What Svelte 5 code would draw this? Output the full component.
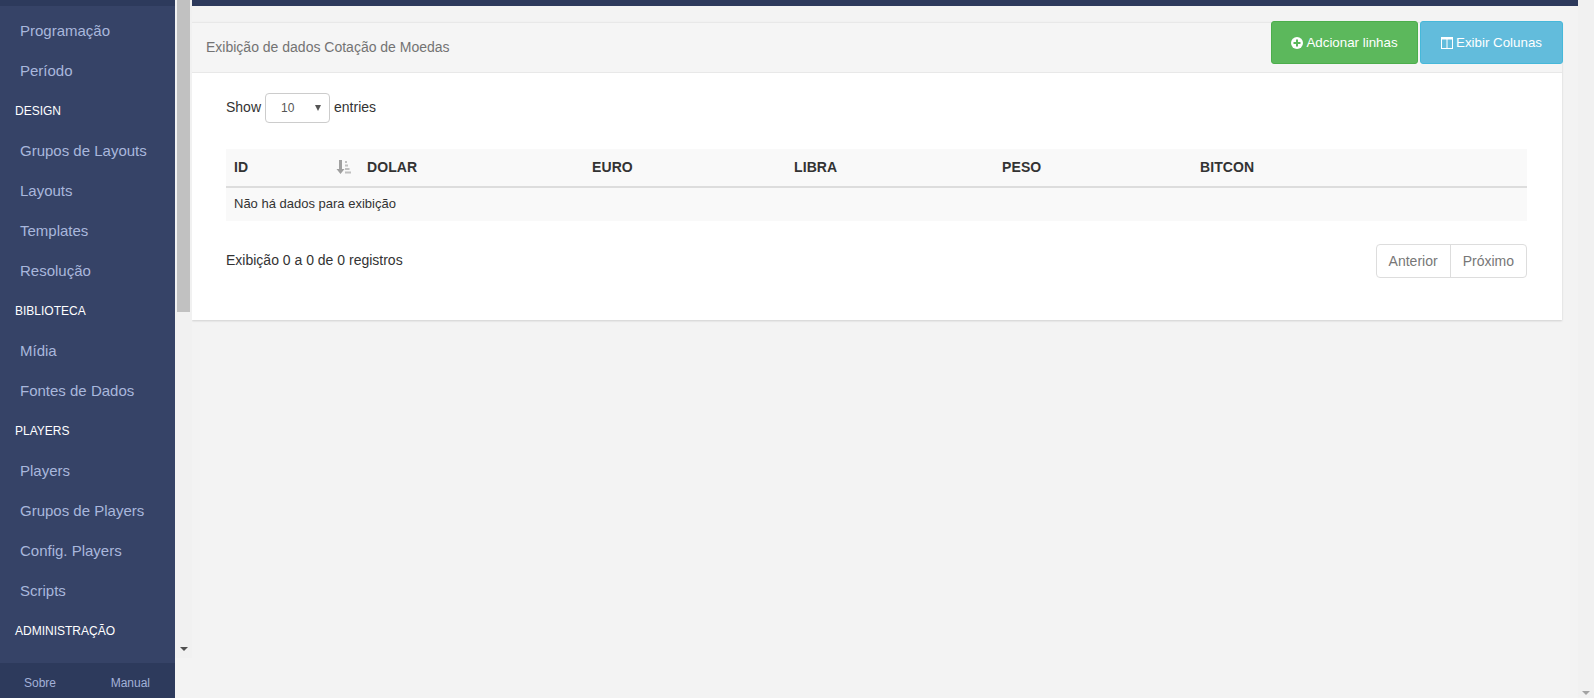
<script lang="ts">
	const menu = [
		{ label: 'Programação' },
		{ label: 'Período' },
		{ label: 'DESIGN', head: true },
		{ label: 'Grupos de Layouts' },
		{ label: 'Layouts' },
		{ label: 'Templates' },
		{ label: 'Resolução' },
		{ label: 'BIBLIOTECA', head: true },
		{ label: 'Mídia' },
		{ label: 'Fontes de Dados' },
		{ label: 'PLAYERS', head: true },
		{ label: 'Players' },
		{ label: 'Grupos de Players' },
		{ label: 'Config. Players' },
		{ label: 'Scripts' },
		{ label: 'ADMINISTRAÇÃO', head: true }
	];

	const columns = [
		{ label: 'ID', width: 133 },
		{ label: 'DOLAR', width: 225 },
		{ label: 'EURO', width: 202 },
		{ label: 'LIBRA', width: 208 },
		{ label: 'PESO', width: 198 },
		{ label: 'BITCON', width: 335 }
	];
</script>

<div class="page">
	<aside class="sidebar">
		<div class="side-top"></div>
		<nav class="menu">
			{#each menu as item}
				<div class:head={item.head} class="item">{item.label}</div>
			{/each}
		</nav>
		<div class="side-foot">
			<span>Sobre</span>
			<span>Manual</span>
		</div>
	</aside>

	<div class="side-scroll">
		<div class="thumb"></div>
		<div class="arrow"></div>
	</div>

	<main class="content">
		<div class="topbar"></div>
		<section class="panel">
			<header class="panel-head">
				<span class="panel-title">Exibição de dados Cotação de Moedas</span>
				<div class="actions">
					<button class="btn green">
						<svg width="12" height="12" viewBox="0 0 12 12">
							<circle cx="6" cy="6" r="6" fill="#fff" />
							<path d="M2.500 6h7M6 2.500v7" stroke="#5cb85c" stroke-width="2" />
						</svg>
						Adcionar linhas
					</button>
					<button class="btn blue">
						<svg width="12" height="12" viewBox="0 0 12 12" fill="none">
							<rect x="0.500" y="0.500" width="11" height="11" stroke="#fff" />
							<path d="M0 1.500h12" stroke="#fff" stroke-width="2" />
							<path d="M6 2v10" stroke="#fff" />
						</svg>
						Exibir Colunas
					</button>
				</div>
			</header>

			<div class="panel-body">
				<div class="length">
					Show
					<div class="select">
						<span>10</span>
						<i class="caret"></i>
					</div>
					entries
				</div>

				<table>
					<thead>
						<tr>
							{#each columns as col, i}
								<th style="width: {col.width}px">
									{col.label}
									{#if i === 0}
										<svg class="sort" width="15" height="14" viewBox="0 0 15 14">
											<path d="M3 0h3v9h2.500L4.500 14 .5 9H3z" fill="#a0a0a0" />
											<path d="M9 1h2v2H9zM9 4.500h3v2H9zM9 8h4.500v2H9zM9 11.500h6v2H9z" fill="#c0c0c0" />
										</svg>
									{/if}
								</th>
							{/each}
						</tr>
					</thead>
					<tbody>
						<tr>
							<td colspan="6">Não há dados para exibição</td>
						</tr>
					</tbody>
				</table>

				<div class="table-foot">
					<span class="info">Exibição 0 a 0 de 0 registros</span>
					<div class="pager">
						<span>Anterior</span>
						<span>Próximo</span>
					</div>
				</div>
			</div>
		</section>
	</main>

	<div class="page-scroll">
		<div class="arrow grey"></div>
	</div>
</div>

<style>
	:global(body) {
		margin: 0;
		background: #f3f3f3;
		overflow: hidden;
	}
	.page {
		display: flex;
		height: 698px;
		font-family: 'Liberation Sans', Arial, sans-serif;
		font-size: 14px;
		color: #333;
	}
	.sidebar {
		width: 175px;
		flex: none;
		display: flex;
		flex-direction: column;
		background: #364367;
	}
	.side-top {
		height: 6px;
		background: #2d3a5c;
	}
	.menu {
		flex: 1;
		padding-top: 5px;
	}
	.item {
		height: 40px;
		line-height: 40px;
		padding-left: 20px;
		font-size: 15px;
		color: #a9b7dc;
		white-space: nowrap;
	}
	.item.head {
		padding-left: 15px;
		font-size: 12px;
		color: #fff;
	}
	.side-foot {
		height: 35px;
		box-sizing: border-box;
		display: flex;
		align-items: center;
		justify-content: space-between;
		padding: 4px 25px 0 24px;
		background: #2d3a5c;
		font-size: 12px;
		color: #a3b1d8;
	}
	.side-scroll {
		width: 17px;
		height: 658px;
		flex: none;
		position: relative;
		background: #f1f1f1;
	}
	.thumb {
		margin: 0 2px;
		height: 312px;
		background: #c1c1c1;
	}
	.arrow {
		position: absolute;
		left: 5px;
		bottom: 7px;
		border-left: 4px solid transparent;
		border-right: 4px solid transparent;
		border-top: 4px solid #505050;
	}
	.arrow.grey {
		border-top-color: #a3a3a3;
		bottom: 3px;
		left: 4px;
	}
	.content {
		flex: 1;
		min-width: 0;
	}
	.topbar {
		height: 6px;
		background: #2d3a5c;
	}
	.panel {
		margin: 16px 16px 0 0;
		background: #fff;
		box-shadow: 0 1px 2px rgba(0, 0, 0, 0.15);
	}
	.panel-head {
		height: 51px;
		display: flex;
		justify-content: space-between;
		background: #f5f5f5;
		border-top: 1px solid #e8e8e8;
		border-bottom: 1px solid #e8e8e8;
		box-sizing: border-box;
		padding-left: 14px;
	}
	.panel-title {
		align-self: center;
		padding-bottom: 2px;
		font-size: 14px;
		color: #737373;
	}
	.actions {
		display: flex;
		gap: 2px;
		height: 43px;
		margin-top: -2px;
		margin-right: -1px;
	}
	.btn {
		display: flex;
		align-items: center;
		justify-content: center;
		gap: 3px;
		height: 43px;
		border-radius: 3px;
		font: 13.33px 'Liberation Sans', Arial, sans-serif;
		color: #fff;
		padding: 0;
	}
	.btn.green {
		width: 147px;
		background: #5cb85c;
		border: 1px solid #4cae4c;
	}
	.btn.blue {
		width: 143px;
		background: #62bcdc;
		border: 1px solid #46b8da;
	}
	.panel-body {
		padding: 20px 35px 42px 34px;
	}
	.length {
		display: flex;
		align-items: flex-start;
		gap: 4px;
		height: 30px;
		line-height: 28px;
	}
	.select {
		width: 65px;
		height: 30px;
		box-sizing: border-box;
		border: 1px solid #ccc;
		border-radius: 4px;
		display: flex;
		align-items: center;
		justify-content: space-between;
		padding: 0 8px 0 15px;
		font-size: 12px;
		color: #555;
	}
	.caret {
		border-left: 3.5px solid transparent;
		border-right: 3.5px solid transparent;
		border-top: 6px solid #555;
	}
	table {
		width: 100%;
		margin-top: 26px;
		border-collapse: collapse;
		table-layout: fixed;
	}
	th {
		position: relative;
		box-sizing: border-box;
		height: 38px;
		padding: 0 8px 2px;
		text-align: left;
		font-size: 14px;
		letter-spacing: 0.1px;
		background: #f9f9f9;
		border-bottom: 2px solid #ddd;
	}
	.sort {
		position: absolute;
		right: 8px;
		top: 11px;
	}
	td {
		height: 34px;
		padding: 0 8px 2px;
		box-sizing: border-box;
		font-size: 13px;
		background: #f9f9f9;
	}
	.table-foot {
		display: flex;
		justify-content: space-between;
		margin-top: 23px;
	}
	.info {
		padding-top: 8px;
	}
	.pager {
		display: flex;
		height: 34px;
		box-sizing: border-box;
		border: 1px solid #ddd;
		border-radius: 4px;
		color: #777;
	}
	.pager span {
		display: flex;
		align-items: center;
		padding: 0 12px;
	}
	.pager span + span {
		border-left: 1px solid #ddd;
	}
	.page-scroll {
		width: 16px;
		flex: none;
		position: relative;
		background: #f1f1f1;
	}
</style>
